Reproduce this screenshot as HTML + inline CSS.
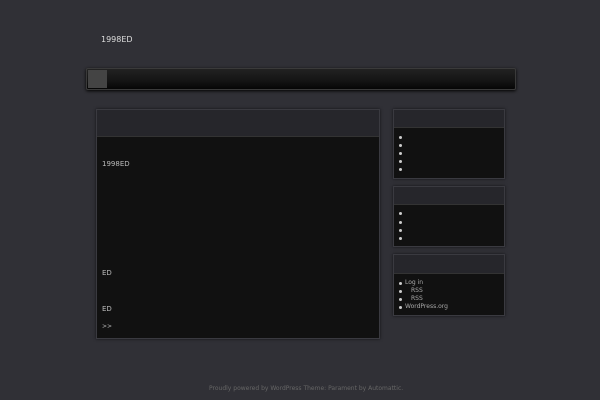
<html><head><style>
body{margin:0;width:600px;height:400px;background:#303036;font-family:"DejaVu Sans","Liberation Sans",sans-serif;position:relative;overflow:hidden;color:#ccc}
div{position:absolute;box-sizing:border-box}
.t{font-size:7px;color:#bbb}
.box{background:#111;box-shadow:0 0 3px rgba(0,0,0,.6);border:1px solid #3a3a40}
.hd{left:0;right:0;top:0;background:#26262b;border-bottom:1px solid #333}
.b{width:3px;height:3px;background:#ccc;border-radius:50%;left:5px}
.li{font-size:6px;color:#aaa;left:11px}
</style></head><body>
<div class="t" style="left:101px;top:35px;font-size:8px;color:#ddd">1998ED</div>
<div style="left:86px;top:68px;width:430px;height:22px;background:linear-gradient(#222 0%,#141414 60%,#050505);border:1px solid #3a3a3a;border-radius:2px;box-shadow:0 1px 3px #000"></div>
<div style="left:88px;top:70px;width:19px;height:18px;background:#444"></div>
<div class="box" style="left:96px;top:109px;width:284px;height:230px"><div class="hd" style="height:27px"></div>
<div class="t" style="left:5px;top:50px">1998ED</div>
<div class="t" style="left:5px;top:159px">ED</div>
<div class="t" style="left:5px;top:195px">ED</div>
<div class="t" style="left:5px;top:213px;font-size:6px">&gt;&gt;</div></div>
<div class="box" style="left:393px;top:109px;width:112px;height:70px"><div class="hd" style="height:18px"></div>
<div class="b" style="top:26px"></div><div class="b" style="top:34px"></div><div class="b" style="top:42px"></div><div class="b" style="top:50px"></div><div class="b" style="top:58px"></div></div>
<div class="box" style="left:393px;top:186px;width:112px;height:61px"><div class="hd" style="height:18px"></div>
<div class="b" style="top:25px"></div><div class="b" style="top:34px"></div><div class="b" style="top:42px"></div><div class="b" style="top:50px"></div></div>
<div class="box" style="left:393px;top:254px;width:112px;height:62px"><div class="hd" style="height:19px"></div>
<div class="b" style="top:27px"></div><div class="li" style="top:24px">Log in</div>
<div class="b" style="top:35px"></div><div class="li" style="top:32px;left:17px">RSS</div>
<div class="b" style="top:43px"></div><div class="li" style="top:40px;left:17px">RSS</div>
<div class="b" style="top:51px"></div><div class="li" style="top:48px">WordPress.org</div></div>
<div style="left:209px;top:385px;font-size:6px;color:#666;white-space:nowrap">Proudly powered by WordPress Theme: Parament by Automattic.</div>
</body></html>
